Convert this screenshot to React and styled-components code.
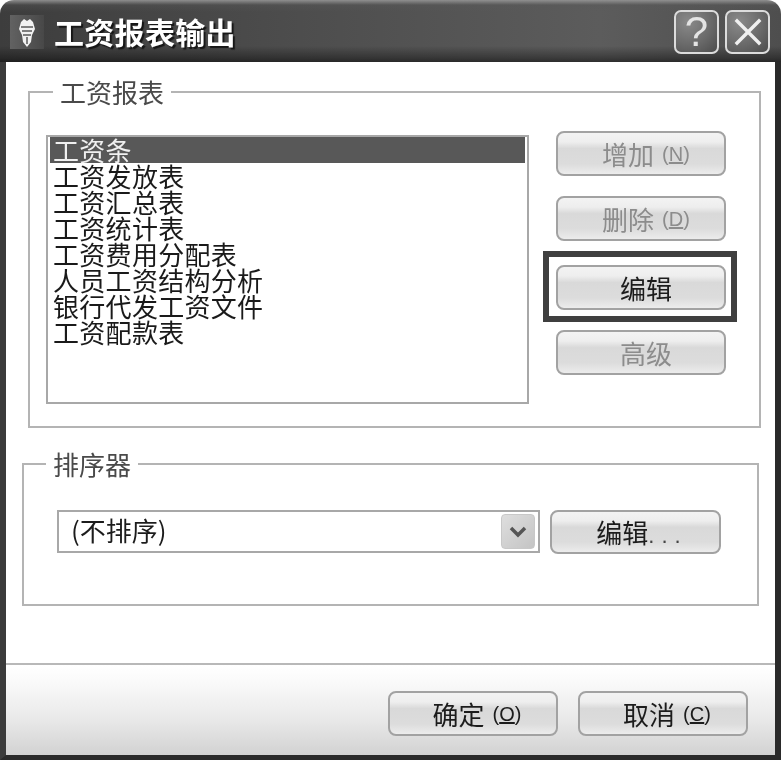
import React from "react";
import styled, { createGlobalStyle } from "styled-components";

const GlobalStyle = createGlobalStyle`
html, body {
  margin: 0;
  padding: 0;
  background: #ffffff;
}
* {
  box-sizing: border-box;
}
`;

const cjk = `"Noto Sans CJK SC", "Liberation Sans", sans-serif`;

const Dialog = styled.div`
  width: 781px;
  height: 760px;
  display: flex;
  flex-direction: column;
  font-family: ${cjk};
  color: #1c1c1c;
  background: #ffffff;
  overflow: hidden;
  filter: blur(0.45px);
`;

const TitleBar = styled.div`
  height: 62px;
  flex: none;
  display: flex;
  align-items: center;
  padding: 4px 11px 2px 10px;
  border-radius: 14px 14px 0 0;
  background:
    linear-gradient(180deg, rgba(150,150,150,.9) 0, rgba(90,90,90,.35) 5px, rgba(0,0,0,0) 12px, rgba(0,0,0,0) 46px, rgba(0,0,0,.35) 58px, rgba(0,0,0,.5) 62px),
    linear-gradient(90deg, #3d3d3d 0, #4d4d4d 300px, #5c5c5c 600px, #4e4e4e 781px);
`;

const AppIcon = styled.svg`
  width: 34px;
  height: 34px;
  flex: none;
`;

const Title = styled.div`
  flex: 1;
  margin: -2px 0 0 10px;
  font-size: 30px;
  line-height: 40px;
  letter-spacing: 0.3px;
  font-weight: 700;
  color: #ffffff;
  text-shadow: 2px 2px 1px #161616;
`;

const CaptionButton = styled.div`
  width: 45px;
  height: 44px;
  margin-left: 6px;
  display: flex;
  align-items: center;
  justify-content: center;
  border: 2px solid #dcdcdc;
  border-radius: 7px;
  background: radial-gradient(circle at 30% 25%, #8a8a8a 0, #6a6a6a 55%, #4c4c4c 100%);
  color: #e4e4e4;
  font-family: "Liberation Sans", sans-serif;
  font-size: 42px;
  line-height: 1;
  font-weight: 400;
`;

const Frame = styled.div`
  flex: 1;
  min-height: 0;
  display: flex;
  flex-direction: column;
  border-left: 6px solid #3b3b3b;
  border-right: 6px solid #2a2a2a;
  border-bottom: 5px solid #2a2a2a;
`;

const Content = styled.div`
  height: 601px;
  flex: none;
  padding-top: 17px;
  display: flex;
  flex-direction: column;
`;

const Group = styled.fieldset`
  margin: ${(p) => p.$margin};
  width: ${(p) => p.$width}px;
  height: ${(p) => p.$height}px;
  padding: 0;
  border: 2px solid #b4b4b4;
  min-width: 0;
`;

const GroupLabel = styled.legend`
  margin-left: ${(p) => p.$indent}px;
  padding: 0 7px;
  font-size: 26px;
  line-height: 26px;
  color: #4a4a4a;
`;

const GroupRow = styled.div`
  display: flex;
  align-items: flex-start;
  gap: ${(p) => p.$gap}px;
  padding: ${(p) => p.$padding};
`;

const ListBox = styled.div`
  width: 483px;
  height: 269px;
  flex: none;
  padding: 0 2px;
  border: 2px solid #a8a8a8;
`;

const ListItem = styled.div`
  height: 26px;
  padding-left: 3px;
  font-size: 26px;
  line-height: 26px;
  letter-spacing: 0.3px;
  white-space: nowrap;
  color: ${(p) => (p.$selected ? "#f0f0f0" : "#1a1a1a")};
  background: ${(p) => (p.$selected ? "#585858" : "transparent")};
`;

const ButtonColumn = styled.div`
  margin-top: -4px;
  display: flex;
  flex-direction: column;
  gap: 20px;
`;

const Button = styled.div`
  width: ${(p) => p.$width || 170}px;
  height: ${(p) => p.$height || 45}px;
  flex: none;
  display: flex;
  align-items: center;
  justify-content: center;
  padding-left: ${(p) => p.$shift || 10}px;
  border: 2px solid #a2a2a2;
  border-radius: 8px;
  background: linear-gradient(180deg, #f3f3f3 0, #eeeeee 22%, #d9d9d9 38%, #dcdcdc 75%, #ececec 100%);
  color: ${(p) => (p.$disabled ? "#8c8c8c" : "#1c1c1c")};
  font-size: 26px;
  line-height: 30px;
  white-space: nowrap;
`;

const Hotkey = styled.span`
  margin-left: 8px;
  font-family: "Liberation Sans", sans-serif;
  font-size: 20px;
`;

const Underlined = styled.span`
  text-decoration: underline;
`;

const Ellipsis = styled.span`
  font-family: "Liberation Sans", sans-serif;
  font-size: 22px;
  letter-spacing: 7px;
  color: #444444;
  align-self: flex-end;
  line-height: 32px;
`;

const Marked = styled.div`
  position: relative;
  margin-top: 4px;

  &::after {
    content: "";
    position: absolute;
    inset: -14px -11px -12px -13px;
    border: 6px solid #3f3f3f;
    pointer-events: none;
  }
`;

const ComboBox = styled.div`
  width: 483px;
  height: 43px;
  flex: none;
  display: flex;
  align-items: center;
  justify-content: space-between;
  padding: 0 3px 0 12px;
  border: 2px solid #a8a8a8;
  font-size: 26px;
  line-height: 30px;
`;

const ComboText = styled.span`
  margin-top: -3px;
`;

const ComboArrow = styled.div`
  width: 34px;
  height: 35px;
  display: flex;
  align-items: center;
  justify-content: center;
  border-radius: 4px;
  background: linear-gradient(135deg, #dedede, #c4c4c4);
  border: 1px solid #c8c8c8;
`;

const Footer = styled.div`
  flex: 1;
  display: flex;
  justify-content: flex-end;
  align-items: flex-start;
  gap: 20px;
  padding: 26px 27px 0 0;
  border-top: 2px solid #b8b8b8;
  background: linear-gradient(180deg, #ffffff 0, #fafafa 18%, #e9e9e9 60%, #d2d2d2 100%);
`;

const items = [
  "工资条",
  "工资发放表",
  "工资汇总表",
  "工资统计表",
  "工资费用分配表",
  "人员工资结构分析",
  "银行代发工资文件",
  "工资配款表",
];

const Keyed = ({ k }) => (
  <Hotkey>
    (<Underlined>{k}</Underlined>)
  </Hotkey>
);

export default function App() {
  return (
    <>
      <GlobalStyle />
      <Dialog>
        <TitleBar>
          <AppIcon viewBox="0 0 34 34">
            <defs>
              <linearGradient id="iconBg" x1="0" x2="1" y1="0" y2="0">
                <stop offset="0" stopColor="#626262" />
                <stop offset="1" stopColor="#484848" />
              </linearGradient>
            </defs>
            <rect width="34" height="34" fill="url(#iconBg)" />
            <path d="M11 7 L14 4 L17 6 L20 4 L23 7 L25 14 L22 20 L21 27 L17 32 L13 27 L12 20 L9 14 Z" fill="#f2f2f2" />
            <path d="M11 12 H23 M12 16 H22 M13 20 H21 M17 22 V29" stroke="#5a5a5a" strokeWidth="1.5" fill="none" />
          </AppIcon>
          <Title>工资报表输出</Title>
          <CaptionButton>?</CaptionButton>
          <CaptionButton>
            <svg width="30" height="30" viewBox="0 0 30 30">
              <path d="M4 4 L26 26 M26 4 L4 26" stroke="#f0f0f0" strokeWidth="3.4" strokeLinecap="square" />
            </svg>
          </CaptionButton>
        </TitleBar>
        <Frame>
          <Content>
            <Group $margin="0 0 0 22px" $width={733} $height={349}>
              <GroupLabel $indent={23}>工资报表</GroupLabel>
              <GroupRow $gap={27} $padding="30px 0 0 16px">
                <ListBox>
                  {items.map((item, i) => (
                    <ListItem key={item} $selected={i === 0}>
                      {item}
                    </ListItem>
                  ))}
                </ListBox>
                <ButtonColumn>
                  <Button $disabled>
                    增加<Keyed k="N" />
                  </Button>
                  <Button $disabled>
                    删除<Keyed k="D" />
                  </Button>
                  <Marked>
                    <Button>编辑</Button>
                  </Marked>
                  <Button $disabled>高级</Button>
                </ButtonColumn>
              </GroupRow>
            </Group>
            <Group $margin="23px 0 0 16px" $width={737} $height={155}>
              <GroupLabel $indent={22}>排序器</GroupLabel>
              <GroupRow $gap={10} $padding="33px 0 0 33px">
                <ComboBox>
                  <ComboText>(不排序)</ComboText>
                  <ComboArrow>
                    <svg width="18" height="12" viewBox="0 0 18 12">
                      <path d="M2 2 L9 9 L16 2" stroke="#555555" strokeWidth="3.5" fill="none" />
                    </svg>
                  </ComboArrow>
                </ComboBox>
                <Button $width={171} $height={44} $shift={13}>
                  编辑<Ellipsis>...</Ellipsis>
                </Button>
              </GroupRow>
            </Group>
          </Content>
          <Footer>
            <Button $shift={8}>
              确定<Keyed k="O" />
            </Button>
            <Button $shift={8}>
              取消<Keyed k="C" />
            </Button>
          </Footer>
        </Frame>
      </Dialog>
    </>
  );
}
